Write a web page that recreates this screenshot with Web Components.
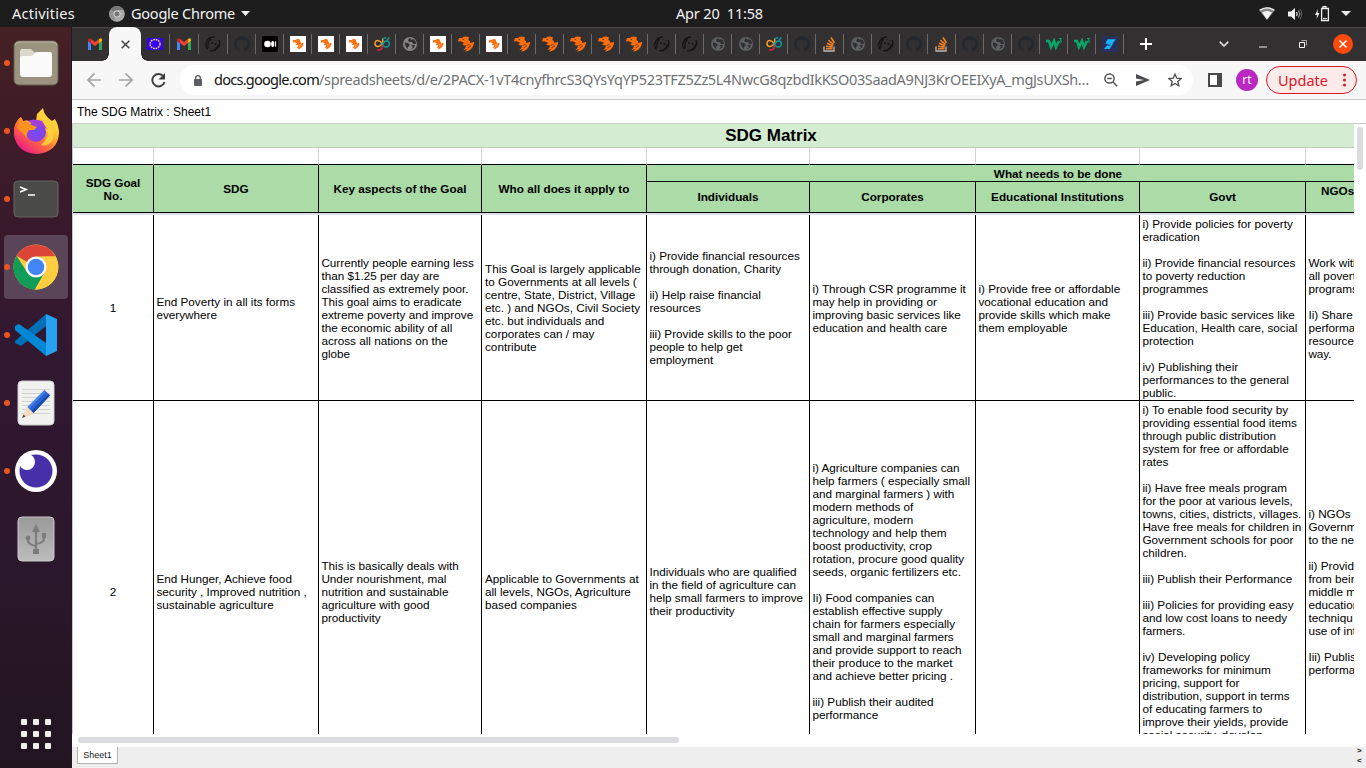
<!DOCTYPE html>
<html lang="en">
<head>
<meta charset="utf-8">
<title>The SDG Matrix : Sheet1</title>
<style>
html,body{margin:0;height:100%;overflow:hidden;background:#fff}
</style>
</head>
<body>
<desktop-shell></desktop-shell>
<script>
const define = (name, css, html, setup) => {
  const t = document.createElement('template');
  t.innerHTML = `<style>*{box-sizing:border-box}${css}</style>${html}`;
  customElements.define(name, class extends HTMLElement {
    constructor() {
      super();
      this.attachShadow({mode: 'open'}).appendChild(t.content.cloneNode(true));
    }
    connectedCallback() { if (setup) setup(this, this.shadowRoot); }
  });
};

/* Inline label whose tracking is adjusted to occupy a given width */
define('fit-text', ':host{display:inline-block;white-space:pre}span{display:inline-block}', '<span></span>', (el, root) => {
  const s = root.querySelector('span');
  s.innerHTML = el.getAttribute('text');
  const w = parseFloat(el.getAttribute('width'));
  const n = s.textContent.length;
  const natural = s.getBoundingClientRect().width;
  s.style.letterSpacing = ((w - natural) / n).toFixed(4) + 'px';
  el.style.width = w + 'px';
});

const tiger = '<path fill="#ff6d0a" d="M0 5.500L1 2 4 2Q7-.5 11 1.500L10.300 3.500Q12.500 5 12.300 7L16 5.800Q16 11 12 14L7 16 9 13 5.200 14.200Q8 12 8 9.800L4 8.600 6.200 7 2.800 5.300Z"/><path d="M8.500 9.500l3-1M9.500 12l3.500-2.300M4.500 3.500l1.500 0" stroke="var(--gap,#333031)" stroke-width=".7"/>';
const icons = {
  gmail: '<path fill="#4285f4" d="M1 14h3V7L1 5z"/><path fill="#34a853" d="M12 14h3V5l-3 2z"/><path fill="#ea4335" d="M4 7V3l4 3 4-3v4l-4 3z"/><path fill="#c5221f" d="M1 5V4q0-3 3-1v4z"/><path fill="#fbbc04" d="M15 5V4q0-3-3-1v4z"/>',
  eu: '<path fill="#30f" d="M0 2h16v12H0z"/><ellipse cx="8" cy="8" rx="5" ry="4.500" fill="none" stroke="#ffe21c" stroke-width="1.400" stroke-dasharray="1.700 .8"/>',
  dark: '<g fill="none" stroke="#141416" stroke-width="1.300"><path d="M9 1Q3 1 1 7Q0 12 3 13M14 4Q17 10 9 15M5 15Q11 15 14 8M3 12Q2 6 6 3"/></g><circle cx="7" cy="7" r=".9" fill="#111"/><circle cx="10.500" cy="8" r=".9" fill="#111"/>',
  github: '<path fill="#24292e" d="M8 0a8 8 0 0 0-2.500 15.600c.4 0 .5-.2.5-.4v-1.500c-2 .4-2.700-.9-2.900-1.500-.4-.8-.9-.8-.9-1.200.9-.2 1.500.7 1.800 1.200.6 1 1.600.8 2.100.6.1-.6.3-.9.5-1.100-2-.2-3.700-.9-3.700-4 0-.9.3-1.600.9-2.200-.1-.2-.4-1 .1-2.100 0 0 .7-.2 2.200.8a7 7 0 0 1 4 0c1.500-1 2.200-.8 2.200-.8.4 1.100.2 1.900.1 2.100.5.6.8 1.300.8 2.200 0 3.100-1.900 3.800-3.700 4 .3.300.6.8.6 1.600v2c0 .2.100.5.500.4A8 8 0 0 0 8 0z"/>',
  medium: '<rect width="16" height="16" rx="1.500"/><circle cx="5.500" cy="8" r="3.300" fill="#fff"/><ellipse cx="10.700" cy="8" rx="1.600" ry="3.100" fill="#fff"/><path stroke="#fff" d="M13.600 5.200v5.600"/>',
  tigerbox: '<path fill="#fff" d="M0 0h16v16H0z"/><g style="--gap:#fff" transform="translate(2.700 2.700) scale(.68)">' + tiger + '</g>',
  tiger: tiger,
  knot: '<g fill="none" stroke-width="1.500"><path stroke="#ff9b26" d="M8.500 9C6 3 1 3.500 1 7.500s5 4 7 0q1.500-3 .5-5"/><path stroke="#0b9ca0" d="M8 6.500c1 6 7.300 5.500 7.300 1.500s-4.800-4-6.300 0M9 3.500Q10 .8 12 2.300M13 4l2.500-2.500"/><path stroke="#e42536" d="M8.500 9.500q.5 5-5.500 4.500"/></g>',
  globe: '<circle cx="8" cy="8" r="7" fill="var(--g,#5b6063)"/><path fill="#333031" d="M3 5.500Q2 8 4 11l2 2V11L8 9 6 7H4zM8 2L6 4l1 2h3l1 2h3Q14 4 11 3L10 4zM9 9l2 2-2 2 3-1 1-3z"/>',
  so: '<g fill="none" stroke-width="1.300"><path stroke="#bcbbbb" d="M2 10.500v4.500h10v-4.500"/><path stroke="#f48024" stroke-width="1.600" d="M4 12.800h6.500M4 10.300l6.500.8M5 7.300l6 2.500M6.500 4.300l5 4.200M9 1.500l3.500 5.500"/></g>',
  w3: '<path fill="none" stroke="#04a767" stroke-width="2.600" d="M0 5H3L5 11 8 5 10 11 13 5"/><path fill="none" stroke="#04a767" d="M13 2.500h2.400L14 4.300q2 0 1.500 1.700-1 1-2.300 0"/>',
  swift: '<path fill="#27315c" d="M0 0h16v16H0z"/><path fill="#16b4f8" d="M5.500 3.300h8.500l-3 3.700H6.300l5 .3-3.600 5.700H2l3-3.500h4.500l-6-2z"/>'
};

/* One favicon slot of the tab strip */
define('tab-icon', ':host{display:flex;width:28px;height:20px;align-items:center;padding-left:6px;border-right:1px solid #6a6868}:host([plain]){border-color:transparent;padding-left:5px}:host([wide]){width:29px}svg{display:block;overflow:visible}', '<svg width="16" height="16" viewBox="0 0 16 16"></svg>', (el, root) => {
  root.querySelector('svg').innerHTML = icons[el.getAttribute('kind')];
});

define('top-bar', `
:host{display:flex;height:27px;background:#1d1d1d;color:#f2f2f2;font:14.500px/27px "Noto Sans",sans-serif;align-items:center}
svg{display:block;flex:none}.a{margin-left:12px;width:97px}.n{margin-left:6px}.d{margin-left:6px}.c{margin-left:426px;width:88px}.s{margin-left:495px;display:flex;align-items:center}`, `
<div class="a"><fit-text width="63" text="Activities"></fit-text></div>
<svg width="16" height="16" viewBox="0 0 16 16"><circle cx="8" cy="8" r="7.800" fill="#aaa"/><path d="M8 8L1.500 3.500A8 8 0 0 1 15 4H8z" fill="#777"/><path d="M8 8l-3 7A8 8 0 0 1 1 4z" fill="#929292"/><circle cx="8" cy="8" r="3.200" fill="#777" stroke="#ddd"/></svg>
<div class="n"><fit-text width="104" text="Google Chrome"></fit-text></div>
<svg class="d" width="9" height="5"><path d="M0 0h9L4.500 5z" fill="#eee"/></svg>
<div class="c"><fit-text width="87" text="Apr 20&nbsp; 11:58"></fit-text></div>
<div class="s">
<svg width="16" height="13" viewBox="0 0 16 13"><path d="M0 3Q8-2.500 16 3L8 13z" fill="#888"/><path d="M.7 3.300Q8-1.500 15.300 3.300" fill="none" stroke="#f2f2f2" stroke-width="1.300"/><path d="M3 5.500Q8 2.500 13 5.500L8 12.500z" fill="#f5f5f5"/></svg>
<svg style="margin-left:12px" width="16" height="14" viewBox="0 0 16 14"><path d="M1 4.500h3L8 1v12L4 9.500H1z" fill="#f2f2f2"/><path d="M9.500 5q1.500 2 0 4" stroke="#eee" fill="none" stroke-width="1.200"/><path d="M11.500 3.500q2.500 3.500 0 7" stroke="#aaa" fill="none"/><path d="M13 2q3.500 5 0 10" stroke="#666" fill="none"/></svg>
<svg style="margin-left:12px" width="15" height="16" viewBox="0 0 15 16"><path d="M3 3L0 9h2l-.5 4L4.500 7h-2z" fill="#eee"/><path d="M8 2V.7h3V2M6.600 2.500h6.800v12H6.600z" fill="none" stroke="#eee" stroke-width="1.300"/><path d="M8 12.500h4" stroke="#eee"/></svg>
<svg style="margin-left:11px" width="10" height="5"><path d="M0 0h10L5 5z" fill="#eee"/></svg>
</div>`);

define('launcher-item', `
:host{display:grid;grid-template-columns:12px 48px;width:72px;height:68px;align-items:center}
i{width:6px;height:6px;border-radius:3px;background:#e95420;margin-left:4px}:host([idle]) i{visibility:hidden}
div{width:48px;height:48px;display:grid;place-items:center}
:host([current]){grid-template-columns:4px 64px}:host([current]) i{margin-left:4px;z-index:1}
:host([current]) div{width:64px;height:64px;border-radius:4px;background:#594557}`, '<i></i><div><slot></slot></div>');

define('app-dock', `
:host{display:flex;flex-direction:column;width:72px;height:741px;background:linear-gradient(#452024 0,#3a1a2a 170px,#311831 330px,#2b172b 540px,#221520);padding-top:2px;border-right:1px solid #221722}
svg{display:block}.grid{margin:auto 0 19px 21px;display:grid;grid-template-columns:repeat(3,6px);gap:6px}.grid b{width:6px;height:6px;border-radius:1px;background:#f0efeb}`, `
<launcher-item><svg width="46" height="46" viewBox="0 0 46 46"><rect x="1" y="1" width="44" height="44" rx="5" fill="#9b937f" stroke="#655f52"/><path d="M2 5q1-3 4-3h34q3 0 4 3" fill="none" stroke="#bbb5a5"/><path d="M7 11q0-2 2-2h9l4 4v8H7z" fill="#dcd9cb"/><path d="M7 18q0-2 2-2h9q2 0 3-2t3-2h13q2 0 2 2v20q0 3-3 3H10q-3 0-3-3z" fill="#fafafa"/></svg></launcher-item>
<launcher-item><svg width="46" height="48" viewBox="0 0 46 48"><defs><linearGradient id="f" x1="1" y1="0" x2=".25" y2="1"><stop stop-color="#fff44f"/><stop offset=".4" stop-color="#ffc332"/><stop offset=".65" stop-color="#ff7139"/><stop offset="1" stop-color="#ed168b"/></linearGradient><radialGradient id="p"><stop stop-color="#704cff"/><stop offset="1" stop-color="#9040dc"/></radialGradient></defs><path fill="url(#f)" d="M1 21Q3 13 8 10L9 15Q13 12 16 14L23 14 24 7 30 1Q31 9 39 14L42 12Q46 19 46 26Q45 45 24 47Q4 46 1 28z"/><circle cx="23" cy="25" r="10" fill="url(#p)"/><path d="M15 14q5-3 14 0l5 8q-5-5-10-3z" fill="#a53ee0"/><path fill="#ff931e" d="M4 21L8 10l3 5 8 3 5 2-3 3h-5q-3 3-2 8Q8 24 4 21z"/><path fill="#ffd33d" d="M31 15q13 5 9 17-4 8-12 6 9-7 6-17z" opacity=".9"/></svg></launcher-item>
<launcher-item><svg width="46" height="38" viewBox="0 0 46 38"><rect x="1" y="1" width="44" height="36" rx="4" fill="#4b4b49" stroke="#656564"/><path d="M7 7l6 2.500L7 12M15 15h7" fill="none" stroke="#fff" stroke-width="1.700"/></svg></launcher-item>
<launcher-item current><svg width="46" height="46" viewBox="0 0 46 46"><circle cx="23" cy="23" r="22.500" fill="#ffcd40"/><path d="M23 23L3.500 11.800A22.500 22.500 0 0 1 42.500 12.500H23z" fill="#db4437"/><path d="M3.500 11.800A22.500 22.500 0 0 0 22 45.500L32 28 14 28z" fill="#0f9d58"/><path d="M42.500 12.500A22.500 22.500 0 0 1 22 45.500L32 28 29 12.500z" fill="#ffcd40"/><circle cx="23" cy="23" r="10.500" fill="#fff"/><circle cx="23" cy="23" r="8.300" fill="#4285f4"/></svg></launcher-item>
<launcher-item><svg width="42" height="42" viewBox="0 0 42 42"><path d="M0 27L31 0v12L6 32 0 29z" fill="#0070b8"/><path d="M0 15V12l4-2 27 19v13L0 16z" fill="#0088d6"/><path d="M31 0l11 5v32l-11 5z" fill="#26a2f0"/></svg></launcher-item>
<launcher-item><svg width="38" height="46" viewBox="0 0 38 46"><rect x="1" y="1" width="36" height="44" rx="4" fill="#f1f1f0" stroke="#ccc"/><path d="M5 9.500h28M5 13.500h28M5 17.500h28M5 21.500h28M5 25.500h28M5 29.500h28M5 33.500h28" stroke="#d2d2d2"/><path d="M5 38l5-11 7 7z" fill="#f8d9bc"/><path d="M10.500 27L27.500 10l5.500 5.500L16.500 33z" fill="#2863d4"/><path d="M14.500 31L31.500 14l1.500 1.500L16.500 33z" fill="#174aa8"/><path d="M10.500 27L27.500 10l1.500 1.500L12 28.500z" fill="#4a86ea"/><path d="M5 38l1.500-3.500 2 2z" fill="#444"/></svg></launcher-item>
<launcher-item><svg width="42" height="42" viewBox="0 0 42 42"><circle cx="21" cy="21" r="21" fill="#fff"/><circle cx="21" cy="21" r="16.500" fill="#4630a9"/><circle cx="12" cy="12" r="8" fill="#fff"/></svg></launcher-item>
<launcher-item idle><svg width="38" height="46" viewBox="0 0 38 46"><defs><linearGradient id="u" x2="0" y2="1"><stop stop-color="#999"/><stop offset="1" stop-color="#bdbdbd"/></linearGradient></defs><rect x="1" y="1" width="36" height="44" rx="4" fill="url(#u)" stroke="#c8c8c8"/><g fill="none" stroke="#7c7c7c" stroke-width="2.200"><path d="M19 13v22M11 22q-1 7 8 8M27 20q1 7-8 8"/></g><path d="M15 16l4-8 4 8z" fill="#7c7c7c"/><path d="M16 33h6v5h-6zM25 17h4v5h-4z" fill="#7c7c7c"/><circle cx="11" cy="22" r="2.500" fill="#7c7c7c"/></svg></launcher-item>
<div class="grid"><b></b><b></b><b></b><b></b><b></b><b></b><b></b><b></b><b></b></div>`);

define('tab-strip', `
:host{display:flex;height:34px;background:#333031;border-top:1px solid #484646;align-items:center;padding:0 0 1px 10px}
svg{display:block;flex:none}.active{width:32px;height:34px;background:#f7f7f7;border-radius:8px 8px 0 0;display:grid;place-items:center;flex:none;position:relative}
.active:before,.active:after{content:"";position:absolute;bottom:0;width:7px;height:7px}.active:before{left:-7px;background:radial-gradient(circle at 0 0,transparent 6.500px,#f7f7f7 7px)}.active:after{right:-7px;background:radial-gradient(circle at 100% 0,transparent 6.500px,#f7f7f7 7px)}
.tabs{display:flex;margin-left:1px}.tabs :first-child{padding-left:5px}tab-icon.first{width:27px}`, `
<tab-icon class="first" kind="gmail" plain></tab-icon>
<div class="active"><svg width="9" height="9"><path d="M.7.7l7.600 7.600M8.300.7L.7 8.300" stroke="#444" stroke-width="1.500"/></svg></div>
<div class="tabs"></div>
<svg style="margin-left:16px" width="12" height="12"><path d="M6 0v12M0 6h12" stroke="#fff" stroke-width="2"/></svg>
<svg style="margin-left:67px" width="10" height="6"><path d="M.7.700L5 5 9.300.700" stroke="#ddd" stroke-width="1.700" fill="none"/></svg>
<svg style="margin-left:30px;margin-top:5px" width="8" height="2"><path d="M0 1h8" stroke="#eee" stroke-width="1"/></svg>
<svg style="margin-left:32px" width="8" height="8"><path d="M.5 2.500h5v5h-5z" fill="none" stroke="#fff"/><path d="M2.500.5h5v5" fill="none" stroke="#aaa"/></svg>
<svg style="margin-left:26px" width="20" height="20"><circle cx="10" cy="10" r="10" fill="#fc4a0c"/><path d="M6.500 6.500l7 7M13.500 6.500l-7 7" stroke="#fff" stroke-width="1.500"/></svg>`, (el, root) => {
  const kinds = 'eu gmail dark github medium tigerbox tigerbox tigerbox knot globe tigerbox tiger tigerbox tiger tiger tiger tiger tiger dark dark globe globe knot github so globe dark github so github globe github w3 w3 swift'.split(' ');
  root.querySelector('.tabs').innerHTML = kinds.map((k, i) => `<tab-icon kind="${k}"${i === 1 || i === 2 ? ' wide' : ''}${i === 9 ? ' style="--g:#858585"' : ''}></tab-icon>`).join('');
});

define('address-bar', `
:host{display:flex;height:39px;background:#f7f7f7;border-bottom:1px solid #c8c8c8;align-items:center;padding-left:15px;font:14.500px/30px "Noto Sans",sans-serif}
svg{display:block;flex:none}.pill{display:flex;align-items:center;background:#fff;border-radius:15px;height:30px;width:1013px;margin-left:14px;padding-left:14px}
.url{margin-left:12px;width:875px;color:#707173;padding-bottom:2px}
.me{width:22px;height:22px;border-radius:50%;background:#bb27c1;color:#fff;font-size:12px;line-height:21px;text-align:center;margin-left:14px}
.up{display:flex;align-items:center;height:28px;width:91px;border:1px solid #dc1527;border-radius:14px;background:#fdebea;color:#dc1527;margin-left:8px;padding-left:11px;line-height:25px}`, `
<svg width="14" height="14"><path d="M7.500.5L1 7l6.500 6.500M1 7h13" fill="none" stroke="#a4a4a4" stroke-width="1.700"/></svg>
<svg style="margin-left:18px" width="14" height="14"><path d="M6.500.5L13 7l-6.500 6.500M13 7H0" fill="none" stroke="#a4a4a4" stroke-width="1.700"/></svg>
<svg style="margin-left:18px" width="15" height="15"><path d="M12.500 3.500A6.200 6.200 0 1 0 13.500 9" fill="none" stroke="#3d3d3d" stroke-width="1.900"/><path d="M14 0v6.500H7.500z" fill="#3d3d3d"/></svg>
<div class="pill"><svg width="8" height="11"><rect y="4" width="8" height="7" rx="1" fill="#5b5f63"/><path d="M1.700 4V3a2.300 2.300 0 0 1 4.600 0v1" fill="none" stroke="#5b5f63" stroke-width="1.300"/></svg>
<div class="url"><fit-text width="105" style="color:#111" text="docs.google.com"></fit-text><fit-text width="770" text="/spreadsheets/d/e/2PACX-1vT4cnyfhrcS3QYsYqYP523TFZ5Zz5L4NwcG8qzbdIkKSO03SaadA9NJ3KrOEEIXyA_mgJsUXSh…"></fit-text></div>
<svg style="margin-left:15px" width="14" height="14"><circle cx="5.500" cy="5.500" r="4.600" fill="none" stroke="#555" stroke-width="1.500"/><path d="M9 9l4.200 4.200M3.200 5.500h4.600" stroke="#555" stroke-width="1.500"/></svg>
<svg style="margin-left:18px" width="14" height="12"><path d="M0 0l14 6-14 6V7.500L8 6 0 4.500z" fill="#4c4d50"/></svg>
<svg style="margin-left:18px" width="14" height="14" viewBox="0 0 14 14"><path d="M7 1.200l1.800 4 4.300.4-3.300 2.900 1 4.300L7 10.500l-3.800 2.300 1-4.300L.9 5.600l4.300-.4z" fill="none" stroke="#4c4d50" stroke-width="1.300"/></svg></div>
<svg style="margin-left:15px" width="14" height="14"><path d="M1 1h12v12H1z" fill="#fff" stroke="#48494b" stroke-width="2"/><path d="M9 1h5v12H9z" fill="#48494b"/></svg>
<div class="me">rt</div>
<div class="up"><fit-text width="50" text="Update"></fit-text><svg style="margin-left:15px" width="3" height="14"><circle cx="1.500" cy="2" r="1.500" fill="#dc1527"/><circle cx="1.500" cy="7" r="1.500" fill="#dc1527"/><circle cx="1.500" cy="12" r="1.500" fill="#dc1527"/></svg></div>`);

define('sheet-cell', `
:host{display:flex;align-items:center;overflow:hidden;border-right:1px solid #000;border-bottom:1px solid #000;padding:0 0 0 2.400px;white-space:pre;min-width:0}
:host([head]){background:#abdba6;font-weight:bold;justify-content:center;text-align:center;padding:0}
:host([center]){justify-content:center;padding:0}
:host([top]){align-items:flex-start;padding-top:2px}
:host([blank]){border-right-color:#d5d5d5}`, '<slot></slot>');

define('sheet-grid', `
:host{display:block;width:1282px;height:611px;overflow:hidden;border-left:1px solid #c8c8c8;font:11.730px/13px "Liberation Sans",Arial,sans-serif;color:#000}
.title{height:25px;border-top:1px solid #c8d0c8;border-bottom:1px solid #bcccb8;background:#d4ecd2;font:bold 17px/23px "Liberation Sans",sans-serif;width:1396px;text-align:center}
.row{display:grid;grid-template-columns:81px 165px 163px 165px 163px 166px 164px 166px 160px}
.r0{height:17px}.r1{height:186px}.r2{height:381px}
.head{grid-template-rows:17px 31px}.freeze{height:2px;background:#dde0ea}
.tall{grid-row:1/3}.wide{grid-column:5/10;padding-left:4px}.sub{padding-bottom:1px}.d{padding-left:3px}`, `
<div class="title">SDG Matrix</div>
<div class="row r0">${'<sheet-cell blank></sheet-cell>'.repeat(9)}</div>
<div class="row head">
<sheet-cell class="tall" head>SDG Goal
No.</sheet-cell><sheet-cell class="tall" head>SDG</sheet-cell><sheet-cell class="tall" head>Key aspects of the Goal</sheet-cell><sheet-cell class="tall" head>Who all does it apply to</sheet-cell><sheet-cell class="wide" head>What needs to be done</sheet-cell><sheet-cell class="sub" head>Individuals</sheet-cell><sheet-cell class="sub" head>Corporates</sheet-cell><sheet-cell class="sub" head>Educational Institutions</sheet-cell><sheet-cell class="sub" head>Govt</sheet-cell><sheet-cell head style="justify-content:flex-start;padding:0 0 13px 15px">NGOs</sheet-cell></div>
<div class="freeze"></div>
<div class="row r1"><sheet-cell center>1</sheet-cell><sheet-cell>End Poverty in all its forms
everywhere</sheet-cell><sheet-cell>Currently people earning less
than $1.25 per day are
classified as extremely poor.
This goal aims to eradicate
extreme poverty and improve
the economic ability of all
across all nations on the
globe</sheet-cell><sheet-cell class="d">This Goal is largely applicable
to Governments at all levels (
centre, State, District, Village
etc. ) and NGOs, Civil Society
etc. but individuals and
corporates can / may
contribute</sheet-cell><sheet-cell>i) Provide financial resources
through donation, Charity

ii) Help raise financial
resources

iii) Provide skills to the poor
people to help get
employment</sheet-cell><sheet-cell>i) Through CSR programme it
may help in providing or
improving basic services like
education and health care</sheet-cell><sheet-cell>i) Provide free or affordable
vocational education and
provide skills which make
them employable</sheet-cell><sheet-cell>i) Provide policies for poverty
eradication

ii) Provide financial resources
to poverty reduction
programmes

iii) Provide basic services like
Education, Health care, social
protection

iv) Publishing their
performances to the general
public.</sheet-cell><sheet-cell>Work with
all poverty
programs

Ii) Share
performa
resources
way.</sheet-cell></div>
<div class="row r2"><sheet-cell center>2</sheet-cell><sheet-cell>End Hunger, Achieve food
security , Improved nutrition ,
sustainable agriculture</sheet-cell><sheet-cell>This is basically deals with
Under nourishment, mal
nutrition and sustainable
agriculture with good
productivity</sheet-cell><sheet-cell class="d">Applicable to Governments at
all levels, NGOs, Agriculture
based companies</sheet-cell><sheet-cell>Individuals who are qualified
in the field of agriculture can
help small farmers to improve
their productivity</sheet-cell><sheet-cell>i) Agriculture companies can
help farmers ( especially small
and marginal farmers ) with
modern methods of
agriculture, modern
technology and help them
boost productivity, crop
rotation, procure good quality
seeds, organic fertilizers etc.

Ii) Food companies can
establish effective supply
chain for farmers especially
small and marginal farmers
and provide support to reach
their produce to the market
and achieve better pricing .

iii) Publish their audited
performance</sheet-cell><sheet-cell></sheet-cell><sheet-cell top>i) To enable food security by
providing essential food items
through public distribution
system for free or affordable
rates

ii) Have free meals program
for the poor at various levels,
towns, cities, districts, villages.
Have free meals for children in
Government schools for poor
children.

iii) Publish their Performance

iii) Policies for providing easy
and low cost loans to needy
farmers.

iv) Developing policy
frameworks for minimum
pricing, support for
distribution, support in terms
of educating farmers to
improve their yields, provide
social security, develop</sheet-cell><sheet-cell>i) NGOs
Governm
to the nee

ii) Provid
from bein
middle m
education
techniqu
use of int

Iii) Publis
performa</sheet-cell></div>`);

define('sheet-page', `
:host{display:flex;flex-direction:column;flex:1;background:#fff;font-family:"Liberation Sans",Arial,sans-serif}
header{height:23px;font-size:12px;line-height:24px;padding-left:5px;color:#000}
.body{display:flex;height:611px}.v{width:12px;border-top:1px solid #c8c8c8;padding:3px 3px}.v b{display:block;width:6px;height:43px;border-radius:3px;background:#dadce0}
.h{height:13px;padding:3px 0 0 6px}.h b{display:block;width:601px;height:6px;border-radius:3px;background:#dadce0}
footer{flex:1;background:#eee;display:flex;justify-content:space-between;padding-left:5px}
.tab{width:41px;height:17px;background:#fff;border:1px solid #b5b5b5;border-top:0;font-size:9px;line-height:16px;text-align:center;color:#222}
.arr{font-size:8px;line-height:10px;font-weight:bold;color:#222;width:9px;margin-top:-1px}`, `
<header>The SDG Matrix : Sheet1</header>
<div class="body"><sheet-grid></sheet-grid><div class="v"><b></b></div></div>
<div class="h"><b></b></div>
<footer><div class="tab">Sheet1</div><div class="arr">&gt;<br>&lt;</div></footer>`);

define('desktop-shell', ':host{display:block;width:1366px;height:768px;overflow:hidden}.m{display:flex}.w{display:flex;flex-direction:column;width:1294px;height:741px}', '<top-bar></top-bar><div class="m"><app-dock></app-dock><div class="w"><tab-strip></tab-strip><address-bar></address-bar><sheet-page></sheet-page></div></div>');
</script>
</body>
</html>
